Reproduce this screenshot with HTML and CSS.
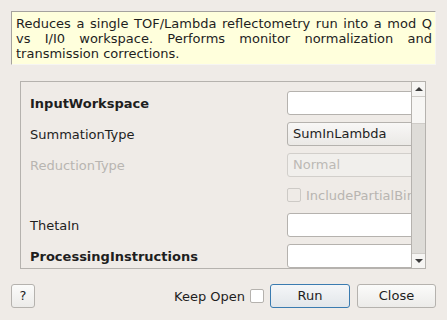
FILE: index.html
```html
<!DOCTYPE html>
<html lang="en">
<head>
  <meta charset="UTF-8">
  <meta name="viewport" content="width=device-width, initial-scale=1.0">
  <title>ReflectometryReductionOne</title>
  <link rel="stylesheet" href="styles.css">
</head>
<body>
  <div class="dialog">
    <div class="description">Reduces a single TOF/Lambda reflectometry run into a mod Q vs I/I0 workspace. Performs monitor normalization and transmission corrections.</div>

    <div class="scroll-area">
      <div class="viewport">
        <div class="form">
          <div class="prop-label required">InputWorkspace</div>
          <div class="line-edit"></div>

          <div class="prop-label">SummationType</div>
          <div class="combo">SumInLambda</div>

          <div class="prop-label disabled">ReductionType</div>
          <div class="combo disabled">Normal</div>

          <div class="prop-label"></div>
          <div class="check-row disabled"><span class="checkbox"></span>IncludePartialBins</div>

          <div class="prop-label">ThetaIn</div>
          <div class="line-edit"></div>

          <div class="prop-label required">ProcessingInstructions</div>
          <div class="line-edit"></div>
        </div>
      </div>
      <div class="scrollbar">
        <div class="sb-button"><span class="arrow-up"></span></div>
        <div class="sb-handle"></div>
        <div class="sb-trough"></div>
        <div class="sb-button"><span class="arrow-down"></span></div>
      </div>
    </div>

    <div class="button-row">
      <div class="button help">?</div>
      <div class="spacer"></div>
      <div class="keep-open">Keep Open <span class="checkbox"></span></div>
      <div class="button run">Run</div>
      <div class="button close">Close</div>
    </div>
  </div>
</body>
</html>
```

FILE: styles.css
```css
body {
  margin: 0;
  background-color: #efebe7;
  font-family: "DejaVu Sans", sans-serif;
  font-size: 13px;
  color: #1e1e1e;
}
.dialog {
  padding: 11px;
  display: flex;
  flex-direction: column;
}
.description {
  background-color: #ffffdc;
  border: 1px solid #f6f5f2;
  border-top-color: #a5a29e;
  border-left-color: #a5a29e;
  padding: 4px 3px 3px 4px;
  line-height: 15px;
  text-align: justify;
}
.scroll-area {
  margin: 16px 10px 0 9px;
  height: 186px;
  border: 1px solid #b5b2ae;
  display: flex;
}
.viewport {
  flex: 1;
  overflow: hidden;
}
.form {
  display: grid;
  grid-template-columns: 257px 180px;
  row-gap: 7px;
  padding: 9px 0 0 9px;
  align-items: center;
}
.prop-label {
  white-space: nowrap;
}
.prop-label.required {
  font-weight: bold;
}
.prop-label.disabled {
  color: #b8b5b1;
}
.line-edit {
  height: 22px;
  border: 1px solid #b5b2ae;
  border-radius: 3px;
  background-color: #ffffff;
}
.combo {
  height: 22px;
  line-height: 22px;
  padding-left: 5px;
  border: 1px solid #b5b2ae;
  border-radius: 3px;
  background: linear-gradient(#f8f7f6, #ebe9e6);
}
.combo.disabled {
  color: #bcb9b5;
  border-color: #d2cfcb;
  background: #f1efec;
}
.check-row {
  height: 22px;
  display: flex;
  align-items: center;
  gap: 5px;
  white-space: nowrap;
}
.check-row.disabled {
  color: #b8b5b1;
}
.checkbox {
  width: 12px;
  height: 12px;
  border: 1px solid #b5b2ae;
  border-radius: 2px;
  background-color: #ffffff;
  flex-shrink: 0;
}
.check-row.disabled .checkbox {
  border-color: #cdcac6;
  background-color: #efebe7;
}
.scrollbar {
  width: 13px;
  border-left: 1px solid #b5b2ae;
  display: flex;
  flex-direction: column;
}
.sb-button {
  height: 14px;
  background-color: #f6f5f3;
  display: flex;
  align-items: center;
  justify-content: center;
}
.sb-button:first-child {
  border-bottom: 1px solid #cfccc8;
}
.sb-button:last-child {
  border-top: 1px solid #cfccc8;
}
.arrow-up {
  border-left: 4px solid transparent;
  border-right: 4px solid transparent;
  border-bottom: 4px solid #3c3c3c;
}
.arrow-down {
  border-left: 4px solid transparent;
  border-right: 4px solid transparent;
  border-top: 4px solid #3c3c3c;
}
.sb-handle {
  height: 26px;
  background-color: #f7f6f4;
  border-bottom: 1px solid #cfccc8;
}
.sb-trough {
  flex: 1;
  background-color: #dedcd8;
}
.button-row {
  margin-top: 15px;
  display: flex;
  align-items: center;
}
.spacer {
  flex: 1;
}
.button {
  height: 22px;
  line-height: 22px;
  text-align: center;
  border: 1px solid #b5b2ae;
  border-radius: 3px;
  background: linear-gradient(#fbfbfa, #ecebe9);
}
.help {
  width: 22px;
}
.keep-open {
  display: flex;
  align-items: center;
  gap: 5px;
  margin-right: 6px;
}
.run {
  width: 78px;
  border-color: #3a7bb0;
  background: linear-gradient(#f4f6f8, #e2e6ea);
}
.close {
  width: 77px;
  margin-left: 7px;
}
```
